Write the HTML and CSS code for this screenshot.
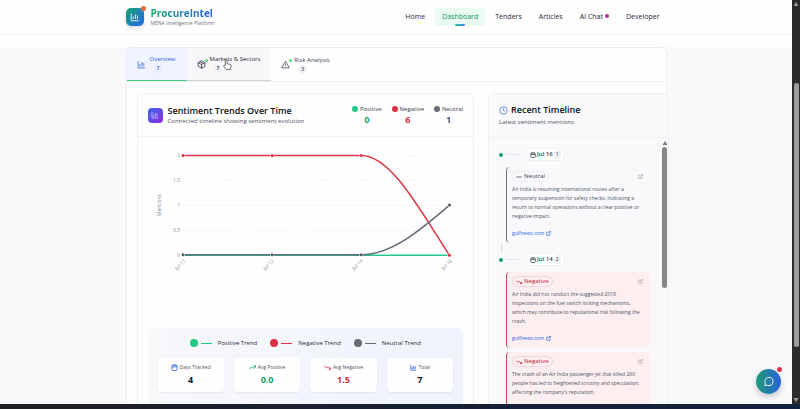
FILE: index.html
```html
<!DOCTYPE html>
<html lang="en">
<head>
<meta charset="utf-8">
<title>ProcureIntel – Dashboard</title>
<link rel="stylesheet" href="styles.css">
</head>
<body>
<svg class="sprite" aria-hidden="true">
  <symbol id="chart" viewBox="0 0 24 24"><path d="M3 3v18h18M8 17v-6M13 17V6M18 17v-9"/></symbol>
  <symbol id="box" viewBox="0 0 24 24"><path d="M12 2l9 5v10l-9 5-9-5V7zM3 7l9 5 9-5M12 12v10M7 4l10 6"/></symbol>
  <symbol id="warn" viewBox="0 0 24 24"><path d="M12 3L2 21h20zM12 10v5M12 17v1"/></symbol>
  <symbol id="clock" viewBox="0 0 24 24"><circle cx="12" cy="12" r="10"/><path d="M12 6v6l4 2"/></symbol>
  <symbol id="cal" viewBox="0 0 24 24"><rect x="3" y="4" width="18" height="18" rx="3"/><path d="M3 10h18M8 1v5M16 1v5"/></symbol>
  <symbol id="up" viewBox="0 0 24 24"><path d="M1 18l8-8 5 5 9-9M16 6h7v7"/></symbol>
  <symbol id="down" viewBox="0 0 24 24"><path d="M1 6l8 8 5-5 9 9M16 18h7v-7"/></symbol>
  <symbol id="minus" viewBox="0 0 24 24"><path d="M1 12h22"/></symbol>
  <symbol id="ext" viewBox="0 0 24 24"><path d="M19 13v8H3V5h9M15 2h7v7M10 14L22 2"/></symbol>
  <symbol id="chat" viewBox="0 0 24 24"><path d="M4 21l1-5A9 9 0 1 1 9 20z"/></symbol>
</svg>
<div class="window">
  <div class="page">
    <header class="topbar">
      <div class="container bar">
        <a class="brand" href="#">
          <span class="logo"><svg class="icon"><use href="#chart"/></svg></span>
          <span class="brand-text"><strong>ProcureIntel</strong><small>MENA Intelligence Platform</small></span>
        </a>
        <nav class="nav">
          <a href="#">Home</a>
          <a href="#" class="current">Dashboard</a>
          <a href="#">Tenders</a>
          <a href="#">Articles</a>
          <a href="#">AI Chat<i class="ping"></i></a>
          <a href="#">Developer</a>
        </nav>
      </div>
    </header>
    <main class="container panel">
      <div class="tabs" role="tablist">
        <button class="tab active" role="tab" aria-selected="true"><svg class="icon"><use href="#chart"/></svg><span class="tab-text">Overview<b>7</b></span></button>
        <button class="tab hover" role="tab"><svg class="icon"><use href="#box"/></svg><i class="live"></i><span class="tab-text">Markets &amp; Sectors<b>7</b></span>
          <svg class="cursor" viewBox="0 0 12 14" aria-hidden="true"><path d="M4 8V2a1 1 0 0 1 2 0v4l4 1q1 0 1 2l-1 4H5L2 9q0-2 2-1z"/></svg></button>
        <button class="tab" role="tab"><svg class="icon"><use href="#warn"/></svg><i class="live"></i><span class="tab-text">Risk Analysis<b>3</b></span></button>
      </div>
      <div class="columns">
        <section class="card trends">
          <div class="card-head">
            <span class="badge"><svg class="icon"><use href="#chart"/></svg></span>
            <div class="heading"><h2>Sentiment Trends Over Time</h2><p>Connected timeline showing sentiment evolution</p></div>
            <dl class="totals">
              <div class="pos"><dt>Positive</dt><dd>0</dd></div>
              <div class="neg"><dt>Negative</dt><dd>6</dd></div>
              <div class="neu"><dt>Neutral</dt><dd>1</dd></div>
            </dl>
          </div>
          <svg class="plot" viewBox="138 137 335 186" role="img" aria-label="Mentions by day">
            <path class="grid" d="M183 155.500H449M183 180.500H449M183 205.500H449M183 230.500H449"/>
            <g class="ylab"><text x="180" y="157">2</text><text x="180" y="182">1.5</text><text x="180" y="207">1</text><text x="180" y="232">0.5</text><text x="180" y="257">0</text></g>
            <text class="axis" transform="translate(161 205) rotate(-90)">Mentions</text>
            <g class="xlab"><text transform="translate(186 261) rotate(-45)">Jul 11</text><text transform="translate(274 261) rotate(-45)">Jul 12</text><text transform="translate(363 261) rotate(-45)">Jul 14</text><text transform="translate(452 261) rotate(-45)">Jul 16</text></g>
            <path class="line g" d="M183 255H449"/>
            <path class="line r" d="M183 155.500H361C391 155.500 420 211 449 255"/>
            <path class="line n" d="M183 254.500H361C391 254.500 420 230 449 205"/>
            <g class="dots n"><circle cx="183" cy="254.500" r="1.500"/><circle cx="272" cy="254.500" r="1.500"/><circle cx="361" cy="254.500" r="1.500"/><circle cx="449" cy="205" r="1.500"/></g>
            <g class="dots r"><circle cx="183" cy="155.500" r="1.500"/><circle cx="272" cy="155.500" r="1.500"/><circle cx="361" cy="155.500" r="1.500"/><circle cx="449" cy="255" r="1.500"/></g>
          </svg>
          <div class="summary">
            <ul class="legend"><li class="pos">Positive Trend</li><li class="neg">Negative Trend</li><li class="neu">Neutral Trend</li></ul>
            <div class="stats">
              <div class="stat blue"><span><svg class="icon"><use href="#cal"/></svg>Days Tracked</span><strong>4</strong></div>
              <div class="stat green"><span><svg class="icon"><use href="#up"/></svg>Avg Positive</span><strong>0.0</strong></div>
              <div class="stat red"><span><svg class="icon"><use href="#down"/></svg>Avg Negative</span><strong>1.5</strong></div>
              <div class="stat blue"><span><svg class="icon"><use href="#chart"/></svg>Total</span><strong>7</strong></div>
            </div>
          </div>
        </section>
        <section class="card timeline">
          <div class="recent-head"><h2><svg class="icon"><use href="#clock"/></svg>Recent Timeline</h2><p>Latest sentiment mentions</p></div>
          <div class="feed-wrap">
            <div class="feed">
              <div class="day"><i></i><time><svg class="icon"><use href="#cal"/></svg>Jul 16<b>1</b></time></div>
              <article class="mention">
                <div class="row"><span class="tag"><svg class="icon"><use href="#minus"/></svg>Neutral</span><a href="#" aria-label="Open"><svg class="icon"><use href="#ext"/></svg></a></div>
                <p>Air India is resuming international routes after a<br>temporary suspension for safety checks, indicating a<br>return to normal operations without a clear positive or<br>negative impact.</p>
                <a class="source" href="#">gulfnews.com<svg class="icon"><use href="#ext"/></svg></a>
              </article>
              <div class="connector"></div>
              <div class="day"><i></i><time><svg class="icon"><use href="#cal"/></svg>Jul 14<b>2</b></time></div>
              <article class="mention bad">
                <div class="row"><span class="tag"><svg class="icon"><use href="#down"/></svg>Negative</span><a href="#" aria-label="Open"><svg class="icon"><use href="#ext"/></svg></a></div>
                <p>Air India did not conduct the suggested 2018<br>inspections on the fuel switch locking mechanisms,<br>which may contribute to reputational risk following the<br>crash.</p>
                <a class="source" href="#">gulfnews.com<svg class="icon"><use href="#ext"/></svg></a>
              </article>
              <article class="mention bad">
                <div class="row"><span class="tag"><svg class="icon"><use href="#down"/></svg>Negative</span><a href="#" aria-label="Open"><svg class="icon"><use href="#ext"/></svg></a></div>
                <p>The crash of an Air India passenger jet that killed 260<br>people has led to heightened scrutiny and speculation,<br>affecting the company's reputation.</p>
              </article>
            </div>
            <div class="feed-scroll"><i class="arrow-up"></i><i class="feed-thumb"></i></div>
          </div>
        </section>
      </div>
    </main>
    <button class="fab" aria-label="Open chat"><svg class="icon"><use href="#chat"/></svg></button>
  </div>
  <div class="scrollbar"><i class="arrow-up"></i><i class="thumb"></i><i class="arrow-down"></i></div>
  <div class="taskbar"></div>
</div>
</body>
</html>
```
FILE: styles.css
```css
* { box-sizing: border-box; }
body, h2, p, ul, dl, dd { margin: 0; padding: 0; }
body { font: 6px/8px "Open Sans", "Noto Sans", sans-serif; color: #4b5563; overflow: hidden; }
a { color: inherit; text-decoration: none; }
button { font: inherit; color: inherit; border: 0; background: none; padding: 0; }
.sprite { display: none; }
.icon { width: 6px; height: 6px; fill: none; stroke: currentColor; stroke-width: 3; flex: none; }

.window { display: grid; grid-template: minmax(0, 1fr) 5px / minmax(0, 1fr) 8px; height: 100vh; }
.page { position: relative; overflow: hidden; background: #f9f9fb; }
.container { width: calc(100% - 24px); max-width: 541px; margin: 0 auto; }

.topbar { background: #fefefe; height: 47px; }
.topbar::after { content: ""; display: block; border-top: 1px solid #f1f2f4; }
.bar { display: flex; justify-content: space-between; align-items: center; height: 34px; }
.brand { display: flex; align-items: center; gap: 7px; }
.logo { position: relative; display: grid; place-items: center; width: 18px; height: 18px; border-radius: 5px; background: linear-gradient(135deg, #18a56f, #2563eb); color: #fff; box-shadow: 0 2px 4px #0002; }
.logo .icon { width: 10px; height: 10px; stroke-width: 2; }
.logo::after { content: ""; position: absolute; top: -2px; right: -2px; width: 5px; height: 5px; border-radius: 50%; background: #e6693c; }
.brand-text { display: flex; flex-direction: column; }
.brand strong { font-size: 10px; line-height: 12px; background: linear-gradient(90deg, #16a06a, #2563eb); background-clip: text; color: transparent; }
.brand small { font-size: 5px; line-height: 8px; color: #6b7280; }
.nav { display: flex; gap: 3px; font-size: 7px; font-weight: 500; color: #1f2937; }
.nav a { position: relative; padding: 0 7px; line-height: 18px; border-radius: 4px; white-space: nowrap; }
.nav .current { background: #eafbf2; color: #0b9a5b; }
.nav .current::after { content: ""; position: absolute; bottom: 0; left: 50%; width: 10px; margin-left: -5px; height: 2px; border-radius: 1px; background: linear-gradient(90deg, #34c589, #3b82f6); }
.ping { display: inline-block; width: 4px; height: 4px; margin-left: 2px; border-radius: 50%; background: #c026a8; vertical-align: 1px; }

.panel { background: #fefefe; border: 1px solid #ebecf1; border-radius: 5px 5px 0 0; min-height: 400px; }
.tabs { display: flex; height: 34px; border-bottom: 1px solid #eef0f3; }
.tab { position: relative; display: flex; align-items: center; gap: 4px; padding: 0 11px 0 10px; font-weight: 500; color: #374151; white-space: nowrap; }
.tab .icon { width: 9px; height: 9px; stroke-width: 2; }
.tab.active { background: #eef3ff; color: #2f5fd8; border-bottom: 1px solid #44cc85; }
.tab.hover { background: #f7f7f9; color: #1f2937; border-bottom: 1px solid #d0d3dc; }
.tab-text { display: flex; flex-direction: column; align-items: flex-start; gap: 1px; }
.tab b { margin-left: 4px; padding: 0 3px; border-radius: 5px; background: #f0f1f4; font-size: 5px; font-weight: 600; line-height: 9px; }
.tab.active b { background: #e8effe; }
.live { position: absolute; top: 11px; left: 18px; width: 3px; height: 3px; border-radius: 50%; background: #4ade80; }
.tab .cursor { position: absolute; left: 35px; top: 10px; width: 10px; height: 13px; fill: #fff; stroke: #555; stroke-width: 1; }

.columns { display: grid; grid-template-columns: minmax(0, 1.86fr) minmax(0, 1fr); gap: 14px; padding: 11px 0 0 10px; margin-right: -4px; }
.card { border: 1px solid #eff0f3; border-radius: 6px; background: #fefefe; }
h2 { font-size: 9px; line-height: 12px; font-weight: 600; color: #0b1220; white-space: nowrap; }
.card-head { display: flex; align-items: center; gap: 5px; height: 43px; padding: 0 10px; border-bottom: 1px solid #f1f2f4; }
.badge { display: grid; place-items: center; width: 15px; height: 15px; border-radius: 4px; background: linear-gradient(135deg, #3b65e8, #8b2fe0); color: #e6e2ff; }
.badge .icon { width: 8px; height: 8px; stroke-width: 2; }
.heading { flex: 1; }
.totals { display: flex; gap: 10px; font-weight: 500; color: #374151; text-align: center; }
.totals dt { display: flex; align-items: center; gap: 2px; line-height: 8px; }
.totals dt::before { content: ""; width: 6px; height: 6px; border-radius: 50%; background: var(--tone); }
.totals dd { font-size: 9px; line-height: 13px; font-weight: 700; color: var(--ink); }
.pos { --tone: #23c982; --ink: #16a067; }
.neg { --tone: #dc3045; --ink: #d32f40; }
.neu { --tone: #646d7a; --ink: #475569; }

.plot { display: block; width: 100%; height: auto; font-size: 5px; fill: #858c97; }
.plot .grid { stroke: #f1f2f4; stroke-dasharray: 2 2; stroke-width: 1; }
.ylab, .xlab { text-anchor: end; }
.axis { text-anchor: middle; font-size: 5px; }
.line { fill: none; stroke-width: 1.5; }
.line.g { stroke: #1fc98a; }
.line.r { stroke: #dd3444; }
.line.n { stroke: #646b7b; }
.dots circle { stroke: #fff; stroke-width: 1; paint-order: stroke; }
.dots.r { fill: #dc2c3e; }
.dots.n { fill: #525968; }

.summary { margin: 5px 10px 0; padding: 10px 10px 20px; border-radius: 6px; background: linear-gradient(90deg, #f7f8fa, #eff3fe); }
.legend { display: flex; justify-content: center; gap: 13px; list-style: none; line-height: 10px; font-weight: 500; color: #1f2937; white-space: nowrap; }
.legend li { display: flex; align-items: center; gap: 3px; }
.legend li::before { content: ""; order: -2; width: 8px; height: 8px; border-radius: 50%; background: var(--tone); }
.legend li::after { content: ""; order: -1; width: 11px; height: 1px; margin-right: 3px; background: var(--tone); }
.stats { display: grid; grid-template-columns: repeat(4, minmax(0, 1fr)); gap: 10px; margin-top: 10px; }
.stat { display: flex; flex-direction: column; align-items: center; padding: 4px 0; border-radius: 4px; background: #fefefe; box-shadow: 0 1px 2px #0001; white-space: nowrap; }
.stat span { display: flex; align-items: center; gap: 2px; font-size: 5px; font-weight: 500; line-height: 10px; }
.stat strong { font-size: 9px; line-height: 16px; color: #111827; }
.stat .icon { width: 7px; height: 7px; }
.blue .icon { color: #3b6fe0; }
.green .icon, .green strong { color: #16a067; }
.red .icon, .red strong { color: #d32f40; }

.timeline { background: #f9f9fb; border-color: #eeeff3; }
.recent-head { height: 44px; padding: 10px; border-bottom: 1px solid #eeeff3; }
.recent-head h2 { display: flex; align-items: center; gap: 3px; }
.recent-head .icon { width: 9px; height: 9px; stroke: #3b6fe0; stroke-width: 2; }
.recent-head p { margin-top: 2px; }
.feed-wrap { display: grid; grid-template-columns: minmax(0, 1fr) 6px; gap: 12px; }
.feed { padding: 10px 0 0 10px; }
.day { display: flex; align-items: center; height: 13px; gap: 3px; }
.day::before { content: ""; width: 4px; height: 4px; border-radius: 50%; background: #169f66; }
.day i { width: 14px; margin-right: 3px; border-top: 1px solid #e6e7ee; }
.day time { display: flex; align-items: center; gap: 1px; padding: 0 3px; border: 1px solid #f0f1f4; border-radius: 4px; background: #fff; font-weight: 600; line-height: 11px; color: #374151; }
.day time .icon { width: 6px; height: 6px; }
.day b { padding: 0 2px; border-radius: 3px; background: #eff0f4; font-size: 5px; line-height: 9px; font-weight: 400; }
.mention { margin: 6px 0 0 7px; padding: 4px 7px 5px 5px; min-height: 76px; border-left: 1px solid #70757e; border-radius: 4px; font-size: 5px; line-height: 9px; }
.mention + .mention { margin-top: 4px; }
.mention.bad { background: #fdeef0; border-left-color: #bd4257; }
.row { display: flex; justify-content: space-between; align-items: center; color: #9ca3af; }
.tag { display: flex; align-items: center; gap: 2px; padding: 0 3px; border: 1px solid #eeeff2; border-radius: 6px; color: #374151; font-size: 6px; line-height: 9px; font-weight: 500; }
.bad .tag { border-color: #f5d3d8; color: #bd1730; }
.mention p { margin-top: 3px; white-space: nowrap; }
.row .icon, .source .icon { width: 5px; height: 5px; }
.row .icon { display: block; }
.row .tag .icon { width: 6px; height: 6px; }
.source { display: flex; align-items: center; gap: 2px; margin-top: 8px; color: #2f62dc; }
.connector { width: 1px; height: 10px; margin-left: 2px; background: #e0e1e6; }
.feed-scroll { padding-top: 3px; }
.feed-scroll .feed-thumb { display: block; height: 141px; width: 5px; margin-top: 2px; border-radius: 3px; background: #858686; }
.arrow-up, .arrow-down { display: block; width: 5px; height: 4px; background: #77797c; clip-path: polygon(50% 0, 100% 100%, 0 100%); }
.arrow-down { clip-path: polygon(0 0, 100% 0, 50% 100%); }

.fab { position: absolute; right: 11px; bottom: 10px; display: grid; place-items: center; width: 25px; height: 25px; border-radius: 50%; background: linear-gradient(90deg, #1f9c76, #2861d8); color: #fff; box-shadow: 0 3px 6px #0003; }
.fab .icon { width: 11px; height: 11px; stroke-width: 2; }
.fab::after { content: ""; position: absolute; top: -2px; right: -1px; width: 5px; height: 5px; border-radius: 50%; background: #e5304b; }
.scrollbar { display: flex; flex-direction: column; align-items: center; padding: 2px 0; background: #2b2b2b; }
.scrollbar i { background: #9c9c9c; }
.scrollbar .thumb { width: 5px; height: 66%; margin-top: 77px; margin-bottom: auto; border-radius: 3px; }
.taskbar { grid-column: 1 / -1; background: linear-gradient(90deg, #202124, #182033 50%, #14213f); }
```
